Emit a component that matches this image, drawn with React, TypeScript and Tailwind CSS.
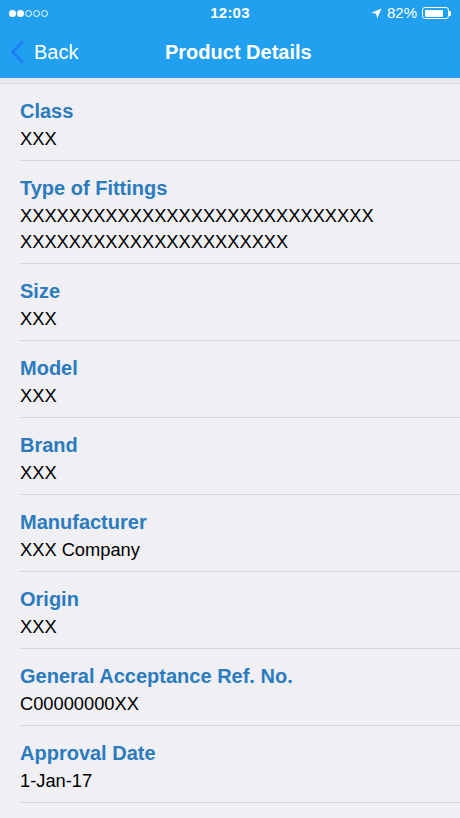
import React from "react";

const rows: { label: string; value: React.ReactNode }[] = [
  { label: "Class", value: "XXX" },
  {
    label: "Type of Fittings",
    value: (
      <>
        XXXXXXXXXXXXXXXXXXXXXXXXXXXXX
        <br />
        XXXXXXXXXXXXXXXXXXXXXX
      </>
    ),
  },
  { label: "Size", value: "XXX" },
  { label: "Model", value: "XXX" },
  { label: "Brand", value: "XXX" },
  { label: "Manufacturer", value: "XXX Company" },
  { label: "Origin", value: "XXX" },
  { label: "General Acceptance Ref. No.", value: "C00000000XX" },
  { label: "Approval Date", value: "1-Jan-17" },
];

export default function App() {
  return (
    <div
      className="w-[460px] h-[818px] overflow-hidden bg-[#efeff4]"
      style={{ fontFamily: '"Liberation Sans", Arial, sans-serif' }}
    >
      <div className="bg-[#20a0ee] h-[78px] flex flex-col">
        {/* status bar */}
        <div className="h-[26px] flex items-center px-[9px] text-white">
          <div className="flex-1 flex items-center gap-[1px]">
            <span className="w-[7px] h-[7px] rounded-full bg-white" />
            <span className="w-[7px] h-[7px] rounded-full bg-white" />
            <span className="w-[7px] h-[7px] rounded-full border border-white" />
            <span className="w-[7px] h-[7px] rounded-full border border-white" />
            <span className="w-[7px] h-[7px] rounded-full border border-white" />
          </div>
          <div className="text-[15px] font-bold tracking-[0.2px]">12:03</div>
          <div className="flex-1 flex items-center justify-end gap-[5px]">
            <svg width="11" height="11" viewBox="0 0 12 12">
              <path d="M11.5 0.5 L0.5 5.2 L5.6 6.4 L6.8 11.5 Z" fill="white" />
            </svg>
            <span className="text-[15px]">82%</span>
            <div className="flex items-center">
              <div className="w-[27px] h-[12px] rounded-[3px] border border-white p-[1.5px]">
                <div className="h-full w-[82%] bg-white rounded-[1px]" />
              </div>
              <div className="w-[2px] h-[5px] bg-white rounded-r-[1px]" />
            </div>
          </div>
        </div>
        {/* nav bar */}
        <div className="flex-1 flex items-center relative">
          <div className="flex items-center pl-[10px] gap-[10px] w-[150px]">
            <svg width="14" height="22" viewBox="0 0 14 22">
              <path
                d="M12 1.5 L2.5 11 L12 20.5"
                fill="none"
                stroke="#1b7ff2"
                strokeWidth="3"
                strokeLinecap="round"
                strokeLinejoin="round"
              />
            </svg>
            <span className="text-white text-[20px]">Back</span>
          </div>
          <div className="pl-[15px] text-white text-[20px] font-bold">Product Details</div>
        </div>
      </div>
      <div className="h-[6px] bg-[#e9e9ee] border-b border-[#d8d8dd]" />
      <div className="pl-[20px]">
        {rows.map((r) => (
          <div key={r.label} className="border-b border-[#d4d4d8] pt-[15px] pb-[8px]">
            <div className="text-[20px] leading-[24px] font-bold text-[#2b7bbd]">{r.label}</div>
            <div className="mt-[3px] text-[18.3px] leading-[26px] text-black">{r.value}</div>
          </div>
        ))}
      </div>
    </div>
  );
}
